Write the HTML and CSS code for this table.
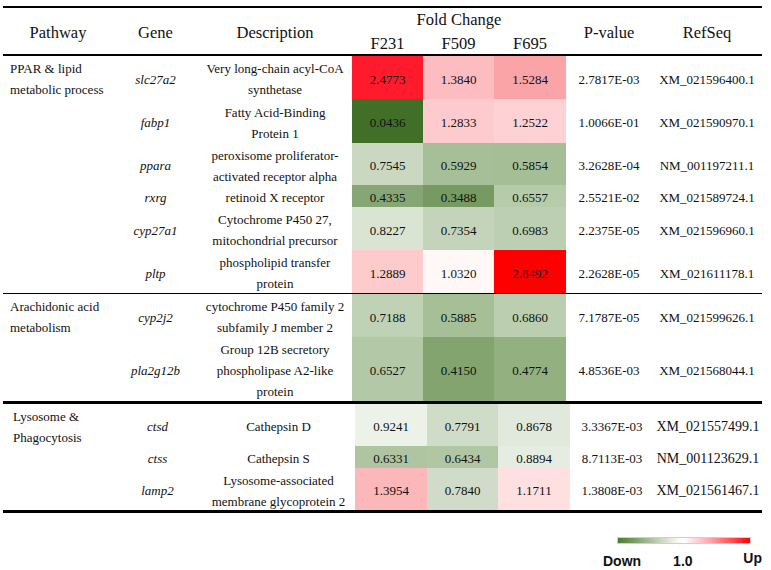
FILE: index.html
```html
<!DOCTYPE html>
<html>
<head>
<meta charset="utf-8">
<link rel="stylesheet" href="styles.css">
</head>
<body>
<div class="table">
  <div class="head">
    <div class="hs c1">Pathway</div>
    <div class="hs c2">Gene</div>
    <div class="hs c3">Description</div>
    <div class="fc">Fold Change</div>
    <div class="f c4">F231</div>
    <div class="f c5">F509</div>
    <div class="f c6">F695</div>
    <div class="hs c7">P-value</div>
    <div class="hs c8">RefSeq</div>
  </div>

  <div class="sec s1">
    <div class="cell path">PPAR &amp; lipid<br>metabolic process</div>
    <div class="cell gene">slc27a2</div>
    <div class="cell">Very long-chain acyl-CoA<br>synthetase</div>
    <div class="cell" style="background:#ff1b2b">2.4773</div>
    <div class="cell" style="background:#fdbcbf">1.3840</div>
    <div class="cell" style="background:#fba4a7">1.5284</div>
    <div class="cell">2.7817E-03</div>
    <div class="cell">XM_021596400.1</div>

    <div class="cell path"></div>
    <div class="cell gene">fabp1</div>
    <div class="cell">Fatty Acid-Binding<br>Protein 1</div>
    <div class="cell" style="background:#426f28">0.0436</div>
    <div class="cell" style="background:#fdcbcd">1.2833</div>
    <div class="cell" style="background:#fed2d4">1.2522</div>
    <div class="cell">1.0066E-01</div>
    <div class="cell">XM_021590970.1</div>

    <div class="cell path"></div>
    <div class="cell gene">ppara</div>
    <div class="cell">peroxisome proliferator-<br>activated receptor alpha</div>
    <div class="cell" style="background:#cad8c1">0.7545</div>
    <div class="cell" style="background:#a7bf98">0.5929</div>
    <div class="cell" style="background:#a6be96">0.5854</div>
    <div class="cell">3.2628E-04</div>
    <div class="cell">NM_001197211.1</div>

    <div class="cell path"></div>
    <div class="cell gene">rxrg</div>
    <div class="cell">retinoid X receptor</div>
    <div class="cell" style="background:#87a676">0.4335</div>
    <div class="cell" style="background:#779a62">0.3488</div>
    <div class="cell" style="background:#b6cbaa">0.6557</div>
    <div class="cell">2.5521E-02</div>
    <div class="cell">XM_021589724.1</div>

    <div class="cell path"></div>
    <div class="cell gene">cyp27a1</div>
    <div class="cell">Cytochrome P450 27,<br>mitochondrial precursor</div>
    <div class="cell" style="background:#d9e4d3">0.8227</div>
    <div class="cell" style="background:#c4d4bb">0.7354</div>
    <div class="cell" style="background:#bdcfb2">0.6983</div>
    <div class="cell">2.2375E-05</div>
    <div class="cell">XM_021596960.1</div>

    <div class="cell path"></div>
    <div class="cell gene">pltp</div>
    <div class="cell">phospholipid transfer<br>protein</div>
    <div class="cell" style="background:#fdcbcc">1.2889</div>
    <div class="cell" style="background:#fff8f7">1.0320</div>
    <div class="cell" style="background:#ff0000">2.8492</div>
    <div class="cell">2.2628E-05</div>
    <div class="cell">XM_021611178.1</div>
  </div>

  <div class="sec s2">
    <div class="cell path">Arachidonic acid<br>metabolism</div>
    <div class="cell gene">cyp2j2</div>
    <div class="cell">cytochrome P450 family 2<br>subfamily J member 2</div>
    <div class="cell" style="background:#c0d2b6">0.7188</div>
    <div class="cell" style="background:#a6bf97">0.5885</div>
    <div class="cell" style="background:#bbceaf">0.6860</div>
    <div class="cell">7.1787E-05</div>
    <div class="cell">XM_021599626.1</div>

    <div class="cell path"></div>
    <div class="cell gene">pla2g12b</div>
    <div class="cell">Group 12B secretory<br>phospholipase A2-like<br>protein</div>
    <div class="cell" style="background:#b3c8a6">0.6527</div>
    <div class="cell" style="background:#83a46f">0.4150</div>
    <div class="cell" style="background:#93b081">0.4774</div>
    <div class="cell">4.8536E-03</div>
    <div class="cell">XM_021568044.1</div>
  </div>

  <div class="sec s3">
    <div class="cell path">Lysosome &amp;<br>Phagocytosis</div>
    <div class="cell gene">ctsd</div>
    <div class="cell">Cathepsin D</div>
    <div class="cell" style="background:#edf2e9">0.9241</div>
    <div class="cell" style="background:#cfdcc8">0.7791</div>
    <div class="cell" style="background:#e0e9db">0.8678</div>
    <div class="cell">3.3367E-03</div>
    <div class="cell ref">XM_021557499.1</div>

    <div class="cell path"></div>
    <div class="cell gene">ctss</div>
    <div class="cell">Cathepsin S</div>
    <div class="cell" style="background:#afc5a2">0.6331</div>
    <div class="cell" style="background:#b1c7a4">0.6434</div>
    <div class="cell" style="background:#e5ede2">0.8894</div>
    <div class="cell">8.7113E-03</div>
    <div class="cell ref">NM_001123629.1</div>

    <div class="cell path"></div>
    <div class="cell gene">lamp2</div>
    <div class="cell">Lysosome-associated<br>membrane glycoprotein 2</div>
    <div class="cell" style="background:#fbb7b9">1.3954</div>
    <div class="cell" style="background:#d0dcc9">0.7840</div>
    <div class="cell" style="background:#fee0e1">1.1711</div>
    <div class="cell">1.3808E-03</div>
    <div class="cell ref">XM_021561467.1</div>
  </div>
</div>

<div class="legend">
  <div class="bar"></div>
  <div class="labels">
    <span class="down">Down</span>
    <span class="one">1.0</span>
    <span class="up">Up</span>
  </div>
</div>
</body>
</html>
```

FILE: styles.css
```css
* { box-sizing: border-box; }

body {
  margin: 0;
  background: #fff;
  color: #111;
  font-family: "Liberation Serif", "Times New Roman", serif;
}

.table {
  width: 759px;
  margin: 6px 0 0 3px;
  border-top: 2px solid #000;
}

.head,
.s1,
.s2 {
  display: grid;
  grid-template-columns: 110px 85px 154px 71px 71px 72px 86px 110px;
}

.head {
  grid-template-rows: 24px 22px;
  border-bottom: 2px solid #000;
  font-size: 16.5px;
}

.hs {
  grid-row: 1 / 3;
  display: flex;
  align-items: center;
  justify-content: center;
  padding-top: 3px;
  line-height: 20px;
}

.c1 { grid-column: 1; }
.c2 { grid-column: 2; }
.c3 { grid-column: 3; }
.c4 { grid-column: 4; }
.c5 { grid-column: 5; }
.c6 { grid-column: 6; }
.c7 { grid-column: 7; }
.c8 { grid-column: 8; }

.fc {
  grid-column: 4 / 7;
  grid-row: 1;
  text-align: center;
  line-height: 24px;
}

.f {
  grid-row: 2;
  text-align: center;
  line-height: 21px;
  padding-top: 1px;
}

.s1 {
  grid-template-rows: 43px 44px 42px 22px 43px 43px;
  border-bottom: 1px solid #000;
}

.s2 {
  grid-template-rows: 43px 64px;
  border-bottom: 3px solid #000;
}

.s3 {
  display: grid;
  grid-template-columns: 110px 89px 153px 72px 71px 72px 84px 108px;
  grid-template-rows: 42px 22px 42px;
  border-bottom: 3px solid #000;
}

.cell {
  display: flex;
  align-items: center;
  justify-content: center;
  text-align: center;
  font-size: 13px;
  line-height: 21px;
  padding-top: 3px;
  white-space: nowrap;
}

.cell.path {
  justify-content: flex-start;
  align-items: flex-start;
  text-align: left;
  padding: 1.5px 0 0 7px;
}

.s3 .cell.path {
  padding-left: 10px;
}

.gene {
  font-style: italic;
}

.ref {
  font-size: 14px;
}

.legend {
  width: 159px;
  margin: 24px 0 0 603px;
  font-family: "Liberation Sans", Arial, sans-serif;
  font-weight: bold;
  font-size: 14px;
  color: #111;
}

.bar {
  margin-left: 14px;
  width: 134px;
  height: 7px;
  border: 1px solid #cfcfcf;
  background: linear-gradient(to right, #4a7b2f 0%, #8eae7b 18%, #c9d9c0 33%, #f4f8f2 45%, #ffffff 50%, #ffd9dc 58%, #ff9aa1 72%, #ff4a52 87%, #ff0000 100%);
}

.labels {
  display: flex;
  align-items: flex-start;
  margin-top: 9px;
  line-height: 16px;
}

.one {
  margin-left: 32px;
}

.up {
  margin-left: auto;
  margin-top: -3px;
}
```
